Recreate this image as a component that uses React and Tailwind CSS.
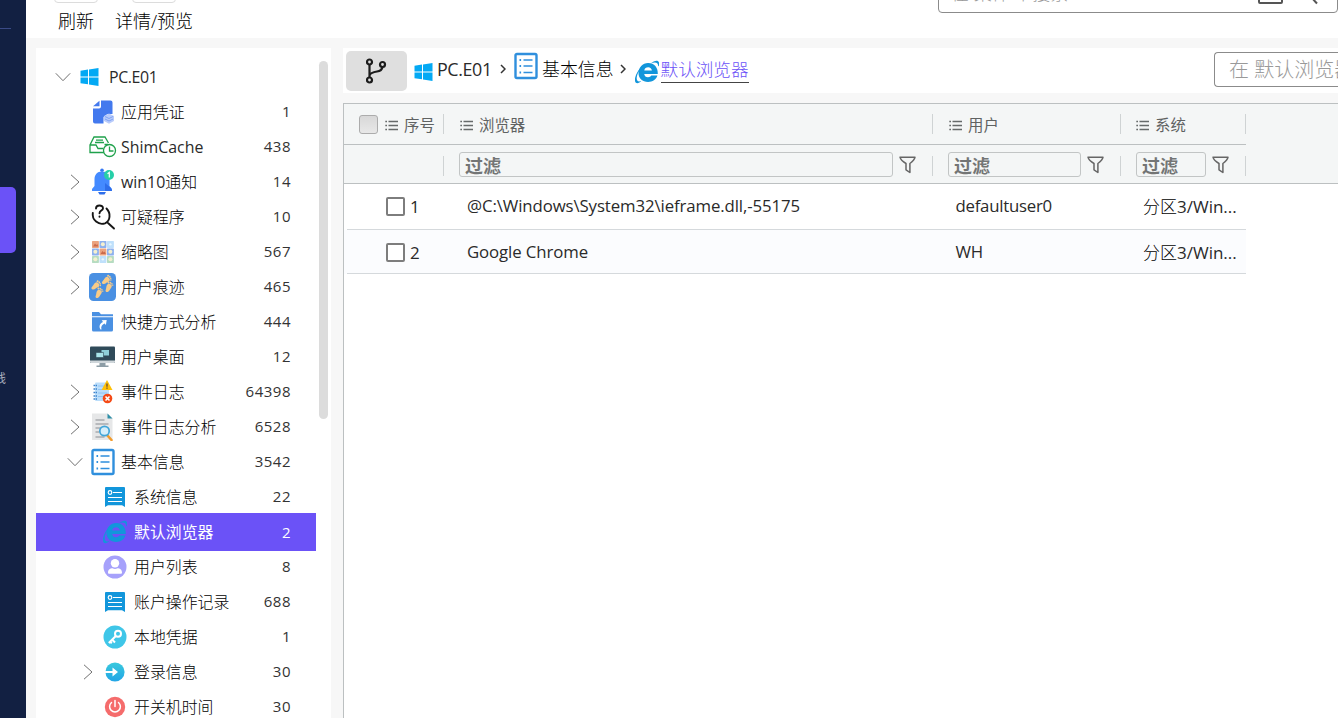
import React from "react";

const LATIN = "font-['Open_Sans','Noto_Sans_CJK_SC',sans-serif]";

const Windows = () => (
  <svg width="19" height="18" viewBox="0 0 19 18" fill="#03a9f4">
    <path d="M0.5 2.7 8 1.6v7H0.5zM9 1.4 18.5 0v8.6H9zM0.5 9.4H8v6.9L0.5 15.2zM9 9.4h9.5V18L9 16.5z" />
  </svg>
);
const Doc = () => (
  <svg width="22" height="24" viewBox="0 0 22 24">
    <path d="M9 .5h9.500a2 2 0 0 1 2 2V14h-5l-4 3v6.500H3a2 2 0 0 1-2-2V8.500h6a2 2 0 0 0 2-2z" fill="#4379ee" />
    <path d="M7.500.8v5.400H1z" fill="#4379ee" />
    <path d="m17 13.500 5 2.500v5l-5 2.800-5-2.800v-5z" fill="#b9ccfb" />
    <path d="m13 16.500 4 2 4-2M13 19l4 2 4-2" fill="none" stroke="#7ea2f5" />
  </svg>
);
const Shim = () => (
  <svg width="28" height="22" viewBox="0 0 28 22" fill="none" stroke="#1fa14b" strokeWidth="1.300">
    <path d="M15 16.500H1V9l4-8h11l3.500 6M1 9h6l2 3.500h5M15.500 8.500H19M7 4.200h7M6 6.500h9" />
    <circle cx="20.500" cy="14.500" r="6" fill="#fff" />
    <path d="M20.500 10.500v4.500h4" />
  </svg>
);
const Bell = () => (
  <svg width="24" height="28" viewBox="0 0 24 28">
    <circle cx="11" cy="2.200" r="1.800" fill="#3577f3" />
    <path d="M11 3.500c5 0 7.500 3.500 7.500 8v6.500l2.500 3v2H1v-2l2.500-3v-6.500c0-4.500 2.500-8 7.500-8z" fill="#448aff" />
    <path d="m14 15 6 5 1 3h-7z" fill="#2f6eea" />
    <path d="M7 24h8l-1.500 2.500h-5z" fill="#2f6eea" />
    <circle cx="18" cy="7" r="5" fill="#26cfa8" />
    <path d="m16.500 5.800 1.800-1.300v5" fill="none" stroke="#fff" strokeWidth="1.200" />
  </svg>
);
const Suspicious = () => (
  <svg width="25" height="26" viewBox="0 0 25 26" fill="none" stroke="#161616" strokeWidth="1.900" strokeLinecap="round">
    <path d="M1.800 9C.8 16 7.500 21.500 14 19.300 19.500 17 20 9 15.500 4.500M17 19l6 5.500" />
    <path d="M5 4.500c0-4 7-4 7-.3 0 2.500-3.500 2.300-3.500 5M8.500 12.500v.3" />
  </svg>
);
const Thumbs = () => {
  const c = ["#eba37f", "#8eb1ee", "#bfe0fb", "#8eb1ee", "#eba37f", "#8eb1ee", "#b6dcc1", "#bfe0fb", "#b6dcc1"];
  return (
    <svg width="22" height="22" viewBox="0 0 22 22">
      {c.map((f, i) => {
        const x = (i % 3) * 7.5, y = Math.floor(i / 3) * 7.5;
        return (
          <g key={i}>
            <rect x={x} y={y} width="6.900" height="6.900" rx=".6" fill={f} />
            {i === 0 || i === 4 ? <path d={`M${x + 1} ${y + 5.5}l2-3 1.300 1.500 1-1 1 2.500z`} fill="#cb6a4b" /> : <circle cx={x + 3.35} cy={y + 3.35} r={f === "#bfe0fb" ? 1.2 : 2} fill={f === "#bfe0fb" ? "#eaf7ff" : "#f4f0cf"} />}
          </g>
        );
      })}
    </svg>
  );
};
const Foot = ({ t }) => (
  <g transform={t} fill="#f9cb87">
    <path d="M-2-3.200c3-1.300 4.800.4 4 2.700C1.500 1 2 2.800 1 4.300c-.9 1.400-3.100.9-3-.9C-1.900 1.500-4-1.500-2-3.200z" />
    <circle cx="-2.600" cy="-4.300" r="1" /><circle cx="-.7" cy="-4.900" r=".9" /><circle cx="1" cy="-4.600" r=".8" /><circle cx="2.400" cy="-3.700" r=".7" />
  </g>
);
const Traces = () => (
  <svg width="28" height="28" viewBox="0 0 28 28">
    <rect width="27" height="28" rx="4.500" fill="#4a90e2" />
    <Foot t="translate(7 13) rotate(50)" />
    <Foot t="translate(17.500 7.500) rotate(50)" />
    <Foot t="translate(10 20.500) rotate(25)" />
    <Foot t="translate(20 14.500) rotate(25)" />
  </svg>
);
const Shortcut = () => (
  <svg width="22" height="20" viewBox="0 0 22 20">
    <path d="M0 0h7l2 2.300h12v2H0zM0 5.300h21V18a1.500 1.500 0 0 1-1.500 1.500h-18A1.500 1.500 0 0 1 0 18z" fill="#4a90e2" />
    <path d="M8.500 17.500c-2-3-.5-6.500 2.500-7.500L9.700 8.200l5-.2-.8 5-1.300-1.500c-2.500 1-4 3-3.100 6z" fill="#fff" />
  </svg>
);
const Desktop = () => (
  <svg width="26" height="22" viewBox="0 0 26 22">
    <rect y=".5" width="25" height="16.500" rx="1" fill="#2f4a59" />
    <path d="M0 14.500h25V16a1 1 0 0 1-1 1H1a1 1 0 0 1-1-1z" fill="#cfd6da" />
    <path d="M9.500 17h6v2.500h3V21h-12v-1.500h3z" fill="#8d9da6" />
    <path d="M11.500 4H19v5.500h-7.500z" fill="#8fd0da" />
    <path d="M6 6.500h7.500v5H6z" fill="#a9e4ea" stroke="#2f4a59" strokeWidth=".6" />
  </svg>
);
const EventLog = () => (
  <svg width="20" height="24" viewBox="0 0 20 24">
    <rect x="2" y="2.500" width="14" height="18.500" rx="1" fill="#bbdefb" />
    <path d="M5 6h9M5 9.500h9M5 13h9M5 16.500h6" stroke="#90c4f4" />
    <path d="M.5 5.500h3.500M.5 9h3.500M.5 12.500h3.500M.5 16h3.500M.5 19h3.500" stroke="#3c83cc" strokeWidth="1.500" strokeDasharray="1.500 .6" />
    <path d="m14 0 5.500 10h-11z" fill="#ffc107" />
    <path d="M14 3.500v3.200M14 7.600v1.200" stroke="#5d4037" strokeWidth="1.200" />
    <circle cx="14.500" cy="18.500" r="4.800" fill="#f44a16" />
    <path d="m12.500 16.500 4 4m0-4-4 4" stroke="#fff" strokeWidth="1.600" />
  </svg>
);
const EventAnalysis = () => (
  <svg width="22" height="28" viewBox="0 0 22 28">
    <path d="M0 .5h15.500L20.500 5v22H0z" fill="#e6e7e8" />
    <path d="M15.500.5v5h5z" fill="#2f8fa8" />
    <path d="M3.500 7h9M3.500 11h13M3.500 15h5M3.500 19h4M3.500 24h9" stroke="#8a8d91" strokeWidth="1.100" />
    <path d="m15 22 4.500 5" stroke="#f29b2c" strokeWidth="2.600" strokeLinecap="round" />
    <circle cx="12.500" cy="18" r="4.700" fill="#d6eefa" stroke="#41a5d8" strokeWidth="1.700" />
  </svg>
);
const ListBox = () => (
  <svg width="25" height="28" viewBox="0 0 25 28" fill="none" stroke="#2f8fdd">
    <rect x="1.500" y="2" width="21" height="24" rx="1.500" strokeWidth="2.400" />
    <path d="M9.500 8h9M9.500 14h9M9.500 20.500h9" strokeWidth="1.400" />
    <path d="M5.500 8h1.600M5.500 14h1.600M5.500 20.500h1.600" strokeWidth="1.800" />
  </svg>
);
const Card = () => (
  <svg width="20" height="20" viewBox="0 0 20 20">
    <path d="M1 0h18a1 1 0 0 1 1 1v19l-3-1.700H3L0 20V1a1 1 0 0 1 1-1z" fill="#1296db" />
    <g fill="none" stroke="#fff" strokeWidth="1.200"><circle cx="5" cy="5.500" r="1.800" /><path d="M8 5.500H17M3 10.500h14M3 14.500h14" /></g>
  </svg>
);
const IE = () => (
  <svg width="24" height="24" viewBox="0 0 24 24" fill="#1296db">
    <path fillRule="evenodd" d="M22.800 14H9.200c.2 2 1.700 3.300 3.800 3.300 1.500 0 2.600-.6 3.300-1.700h6.100c-1.200 4-4.800 6.400-9.300 6.400C7.500 22 3.500 18.300 3.500 13S7.500 3 13.200 3c6 0 10 4.500 9.600 11zM9.300 10.500h7.600c-.2-1.900-1.700-3.200-3.700-3.200-2.100 0-3.600 1.200-3.900 3.200z" />
    <path d="M23 6.500c.7-4.800-3.300-4.700-7.500-3C20-.3 25.100-.8 24 5.500zM14.500 3.500C8.500 4.500 3.500 10 2 16c-1 4 .5 6.800 4.500 4.800C3 24.800-1.300 23.800.2 17.500 1.900 10.500 8 3.700 14.500 3.500z" />
  </svg>
);
const UserIcon = () => (
  <svg width="24" height="24" viewBox="0 0 24 24"><circle cx="12" cy="12" r="11.500" fill="#a6a1fb" /><circle cx="12" cy="8.300" r="4.200" fill="#fff" /><path d="M5 17.500c0-3 2.500-4.300 4.500-4.300 1.500 1 3.500 1 5 0 2 0 4.500 1.300 4.500 4.300 0 1-.5 1.300-1.300 1.300H6.300c-.8 0-1.300-.3-1.300-1.300z" fill="#fff" /></svg>
);
const KeyIcon = () => (
  <svg width="24" height="24" viewBox="0 0 24 24"><circle cx="12" cy="12" r="11.500" fill="#3fc6e8" /><g fill="none" stroke="#fff" strokeWidth="2"><circle cx="15" cy="8.700" r="3" /><path d="m12.800 11-7 7M9 14.500l3 3M7 16.500l1.800 1.800" /></g></svg>
);
const Login = () => (
  <svg width="20" height="20" viewBox="0 0 20 20"><defs><linearGradient id="lg" x1="0" y1="0" x2="0" y2="1"><stop stopColor="#39c9dd" /><stop offset="1" stopColor="#22a5e6" /></linearGradient></defs><circle cx="10" cy="10" r="9.600" fill="url(#lg)" /><path d="M0 8.900h7.500V5.500l5.500 4.500-5.500 4.500v-3.400H0z" fill="#fff" /></svg>
);
const Power = () => (
  <svg width="22" height="22" viewBox="0 0 22 22"><circle cx="11" cy="11" r="10.200" fill="#f56c6c" /><path d="M11 4.500v6M7.500 6.500a5.400 5.400 0 1 0 7 0" fill="none" stroke="#fff" strokeWidth="1.500" strokeLinecap="round" /></svg>
);
const Chevron = ({ open }) => (
  <svg width="16" height="16" viewBox="0 0 16 16" fill="none" stroke="#707070" strokeWidth="1">
    <path d={open ? "M.8 4.300 8 11.700l7.200-7.400" : "m4 .8 8 7.200-8 7.200"} />
  </svg>
);
const Lines = () => (
  <svg width="13" height="11" viewBox="0 0 13 11" stroke="#666a6a" fill="none" strokeWidth="1.400">
    <path d="M3.500 1.500H13M3.500 5.500H13M3.500 9.500H13" /><path d="M.3 1.500h1.700M.3 5.500h1.700M.3 9.500h1.700" />
  </svg>
);
const Funnel = () => (
  <svg width="17" height="18" viewBox="0 0 17 18" fill="none" stroke="#666" strokeWidth="1.500" strokeLinejoin="round">
    <path d="M1 1.200h15c-.3 2.300-2.400 4.300-5.100 6.300v9L7 13.800V7.500C3.500 5.500 1.500 3.500 1 1.200z" />
  </svg>
);
const Caret = () => (
  <svg width="6" height="10" viewBox="0 0 6 10" fill="none" stroke="#333" strokeWidth="1.500"><path d="m1 1 4 4-4 4" /></svg>
);

const rows = [
  [0, "open", Windows, "PC.E01", ""],
  [1, "", Doc, "应用凭证", "1"],
  [1, "", Shim, "ShimCache", "438"],
  [1, "closed", Bell, "win10通知", "14"],
  [1, "closed", Suspicious, "可疑程序", "10"],
  [1, "closed", Thumbs, "缩略图", "567"],
  [1, "closed", Traces, "用户痕迹", "465"],
  [1, "", Shortcut, "快捷方式分析", "444"],
  [1, "", Desktop, "用户桌面", "12"],
  [1, "closed", EventLog, "事件日志", "64398"],
  [1, "closed", EventAnalysis, "事件日志分析", "6528"],
  [1, "open", ListBox, "基本信息", "3542"],
  [2, "", Card, "系统信息", "22"],
  [2, "", IE, "默认浏览器", "2"],
  [2, "", UserIcon, "用户列表", "8"],
  [2, "", Card, "账户操作记录", "688"],
  [2, "", KeyIcon, "本地凭据", "1"],
  [2, "closed", Login, "登录信息", "30"],
  [2, "", Power, "开关机时间", "30"],
];
const indent = ["pl-[19px]", "pl-[31px]", "pl-[44px]"];
const iconGap = ["ml-1 mr-1.5", "ml-1.5 mr-1", "ml-[5px] mr-[5px]"];

// Latin runs take the regular weight, Chinese runs the light one.
const Mixed = ({ children }) =>
  children.split(/([\u4e00-\u9fff]+)/).filter(Boolean).map((run, i) => (
    <span key={i} className={/[\u4e00-\u9fff]/.test(run) ? "font-light" : "font-normal text-[#2a2a2a]"}>{run}</span>
  ));

function TreeRow({ row: [level, state, Icon, label, count] }) {
  const active = label === "默认浏览器";
  return (
    <div className={`flex shrink-0 items-center w-[280px] pr-[25px] ${indent[level]} ${active ? "h-[38px] -mt-px -mb-0.5 bg-[#6b52f7] text-white" : "h-[35px] text-black"}`}>
      <span className="w-4 shrink-0">{state && <Chevron open={state === "open"} />}</span>
      <span className={`flex w-7 shrink-0 items-center justify-center ${iconGap[level]}`}><Icon /></span>
      <span className={`pt-0.5 whitespace-nowrap text-[15.9px] leading-none ${label === "PC.E01" ? "tracking-[-0.4px]" : ""}`}>{active ? label : <Mixed>{label}</Mixed>}</span>
      <span className={`ml-auto text-[15px] leading-none tracking-[0.5px] ${active ? "" : "text-[#333]"}`}>{count}</span>
    </div>
  );
}

const cols = "grid grid-cols-[100px_489px_188px_125px]";
const Head = ({ children, pad = "pl-[16px]" }) => (
  <div className={`flex items-center ${pad}`}>
    <span className="pt-0.5"><Lines /></span>
    <span className="ml-1.5 pt-[3px] text-[15.4px] leading-none text-[#5f6262]">{children}</span>
    <span className="ml-auto h-5 w-px bg-[#cfd3d4]" />
  </div>
);
const Filter = () => (
  <div className="flex items-center pl-[15px]">
    <div className="flex h-[25px] flex-1 items-center rounded-[3px] border border-[#c2c5c5] pt-[3px] pl-[5px] text-lg leading-none font-bold text-[#737575]">过滤</div>
    <span className="mr-4 ml-1.5 pt-0.5"><Funnel /></span>
    <span className="mt-1 h-5 w-px bg-[#cfd3d4]" />
  </div>
);
const Box = () => <span className="mr-[5px] ml-[39px] h-[19px] w-[19px] rounded-[2px] border-2 border-[#7d7d7d] bg-white" />;
const Row = ({ n, a, b, c, h, bg }) => (
  <div className={`w-[902px] pl-[3px] ${bg}`}>
    <div className={`grid grid-cols-[97px_489px_188px_125px] items-center border-b border-[#d5d9dc] text-[17px] leading-none text-black ${h}`}>
      <div className="flex items-center"><Box /><Mixed>{n}</Mixed></div>
      <div className="pl-[23px] text-[16.800px] tracking-[-0.1px]"><Mixed>{a}</Mixed></div>
      <div className="pl-[22.500px] text-[16.800px] tracking-[-0.25px]"><Mixed>{b}</Mixed></div>
      <div className="pl-[22px] whitespace-nowrap"><Mixed>{c}</Mixed></div>
    </div>
  </div>
);

export default function App() {
  return (
    <div className={`flex h-[718px] w-[1338px] overflow-hidden bg-[#f7f7f7] ${LATIN}`}>
      <aside className="flex w-[26px] shrink-0 flex-col overflow-hidden bg-[#122042]">
        <div className="mt-7 h-px w-[11px] bg-[#3a4a86]" />
        <div className="mt-[158px] h-[66px] w-4 rounded-r-[5px] bg-[#6b52f7]" />
        <div className="mt-[119px] -ml-[18px] text-xs leading-[14px] whitespace-nowrap text-[#a9afbf]">在线</div>
      </aside>
      <div className="flex min-w-0 flex-1 flex-col">
        <header className="flex h-[38px] shrink-0 items-start justify-between overflow-hidden bg-white">
          <div className="flex pl-[27px] text-lg font-light text-black">
            <div className="flex w-[46px] flex-col items-center">
              <div className="-mt-2 mb-[9px] h-[11px] w-11 shrink-0 rounded border border-[#dcdcdc]" />
              <span className="leading-[19px] whitespace-nowrap">刷新</span>
            </div>
            <div className="ml-4 flex w-[78px] flex-col items-center">
              <div className="-mt-2 mb-[9px] h-[11px] w-11 shrink-0 rounded border border-[#dcdcdc]" />
              <span className="leading-[19px] whitespace-nowrap">详情/预览</span>
            </div>
          </div>
          <div className="-mt-7 flex h-[41px] w-[400px] items-center rounded border border-[#8b8b8b] pr-4 pl-3 text-lg font-light text-[#999]">
            <span>在 案件 中搜索</span>
            <svg className="ml-auto" width="66" height="24" viewBox="0 0 66 24" fill="none" stroke="#555" strokeWidth="2"><rect x="4" y="2" width="23" height="20" rx="1" /><circle cx="51" cy="11" r="7" /><path d="m56 16 6 6.500" /></svg>
          </div>
        </header>
        <main className="flex min-h-0 flex-1 pt-2.5 pl-2.5">
          <nav className="flex w-[295px] shrink-0 justify-between overflow-hidden bg-white pr-[3px]">
            <div className="flex flex-col pt-[11px]">{rows.map((r) => <TreeRow key={r[3]} row={r} />)}</div>
            <div className="mt-[13px] h-[358px] w-[9px] rounded-full bg-[#dcdcdc]" />
          </nav>
          <section className="ml-3 flex min-w-0 flex-1 flex-col">
            <div className="flex h-[45px] shrink-0 items-center bg-white pl-[3px] text-lg font-light text-black">
              <div className="flex h-10 w-[61px] shrink-0 items-center justify-center rounded-[5px] bg-[#dfdfdf]">
                <svg width="22" height="26" viewBox="0 0 22 26" fill="none" stroke="#1c1c1c" strokeWidth="2.200"><circle cx="3.500" cy="4" r="2.500" /><circle cx="16.500" cy="6.500" r="2.500" /><circle cx="3.500" cy="22" r="2.500" /><path d="M3.500 6.500v13M16.500 9c-.5 3-2 4-5.500 4.500-4 .5-6.500 1-7.500 4" /></svg>
              </div>
              <span className="mt-0.5 ml-[7px]"><Windows /></span>
              <span className="-mt-0.5 ml-1 w-[56px] text-[17.900px] leading-none tracking-[-0.4px]"><Mixed>PC.E01</Mixed></span>
              <span className="-mt-1 ml-[7px]"><Caret /></span>
              <span className="-mt-2.5 ml-[8px]"><ListBox /></span>
              <span className="-mt-0.5 ml-[3px] text-[17.900px] leading-none">基本信息</span>
              <span className="-mt-1 ml-[6px]"><Caret /></span>
              <span className="mt-0.5 ml-[9px]"><IE /></span>
              <span className="ml-[2px] border-b border-[#444] pb-0.5 text-[17.600px] leading-[22px] text-[#6b52f7]">默认浏览器</span>
              <div className="-mt-0.5 ml-auto flex h-[35px] w-[124px] shrink-0 items-center overflow-hidden rounded-l border border-r-0 border-[#8b8b8b] pl-3.5 text-xl whitespace-nowrap text-[#999]">在 默认浏览器 中搜索</div>
            </div>
            <div className="mt-2.5 flex flex-1 flex-col border-t border-l border-[#bcc0c1] bg-white">
              <div className="h-20 shrink-0 border-b border-[#bcc0c1] bg-[#f4f6f6]">
                <div className={`${cols} h-[41px] w-[902px] border-b border-[#bcc0c1]`}>
                  <div className="flex items-center">
                    <span className="ml-[15px] h-[19px] w-[19px] shrink-0 rounded-[3px] border border-[#acacac] bg-linear-to-b from-[#d8d8d8] to-[#e8e8e8]" />
                    <div className="flex-1"><Head pad="pl-[7px]">序号</Head></div>
                  </div>
                  <Head>浏览器</Head><Head>用户</Head><Head pad="pl-[15px]">系统</Head>
                </div>
                <div className={`${cols} h-[38px] w-[902px]`}>
                  <div className="flex items-center justify-end"><span className="mt-1 h-5 w-px bg-[#cfd3d4]" /></div>
                  <Filter /><Filter /><Filter />
                </div>
              </div>
              <Row n="1" a="@C:\Windows\System32\ieframe.dll,-55175" b="defaultuser0" c="分区3/Win..." h="h-[46px]" bg="bg-white" />
              <Row n="2" a="Google Chrome" b="WH" c="分区3/Win..." h="h-11 pt-0.5" bg="bg-[#fbfcfe]" />
            </div>
          </section>
        </main>
      </div>
    </div>
  );
}
